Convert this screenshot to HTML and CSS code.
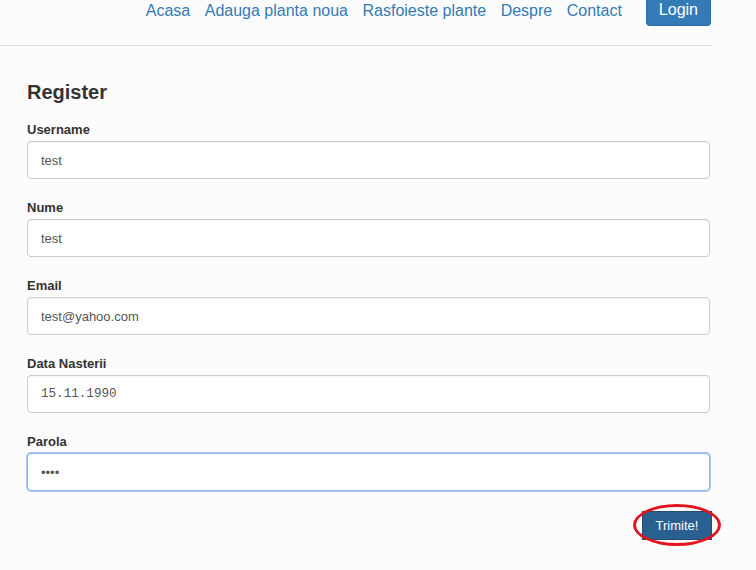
FILE: index.html
```html
<!DOCTYPE html>
<html lang="ro">
<head>
<meta charset="utf-8">
<title>Register</title>
<link rel="stylesheet" href="styles.css">
</head>
<body>
<header class="topbar">
  <nav class="nav">
    <a class="nav-link" href="#">Acasa</a>
    <a class="nav-link" href="#">Adauga planta noua</a>
    <a class="nav-link" href="#">Rasfoieste plante</a>
    <a class="nav-link" href="#">Despre</a>
    <a class="nav-link" href="#">Contact</a>
    <a class="btn-login" href="#">Login</a>
  </nav>
</header>
<main class="content">
  <h1 class="title">Register</h1>
  <form class="form">
    <div class="group">
      <label class="label">Username</label>
      <input class="control" type="text" value="test">
    </div>
    <div class="group">
      <label class="label">Nume</label>
      <input class="control" type="text" value="test">
    </div>
    <div class="group">
      <label class="label">Email</label>
      <input class="control" type="text" value="test@yahoo.com">
    </div>
    <div class="group">
      <label class="label">Data Nasterii</label>
      <input class="control mono" type="text" value="15.11.1990">
    </div>
    <div class="group">
      <label class="label">Parola</label>
      <input class="control focused" type="password" value="test">
    </div>
    <div class="actions">
      <span class="submit-wrap">
        <button class="btn-submit" type="button">Trimite!</button>
        <span class="ring"></span>
      </span>
    </div>
  </form>
</main>
</body>
</html>
```
FILE: styles.css
```css
html, body {
  margin: 0;
  padding: 0;
  background: #fcfcfc;
}
body {
  font-family: "Liberation Sans", Arial, sans-serif;
  color: #333;
}
.topbar {
  width: 712px;
  height: 45px;
  border-bottom: 1px solid #dedede;
}
.nav {
  display: flex;
  justify-content: flex-end;
  align-items: flex-start;
  gap: 14.5px;
  padding-right: 1px;
}
.nav-link {
  font-size: 16px;
  line-height: 20px;
  margin-top: 1px;
  color: #337ab7;
  text-decoration: none;
}
.btn-login {
  margin-left: 9.5px;
  margin-top: -6px;
  padding: 6px 12px 5px;
  font-size: 16px;
  line-height: 20px;
  color: #fff;
  background: #337ab7;
  border: 1px solid #2e6da4;
  border-top: 0;
  border-radius: 0 0 4px 4px;
  text-decoration: none;
}
.content {
  padding: 0 0 20px 27px;
  width: 683px;
}
.title {
  margin: 35px 0 19px;
  font-size: 20px;
  line-height: 22px;
  font-weight: bold;
  color: #333;
}
.form {
  margin: 0;
}
.group {
  display: flex;
  flex-direction: column;
  margin-bottom: 21px;
}
.label {
  font-size: 13px;
  line-height: 15px;
  font-weight: bold;
  color: #333;
  margin-bottom: 4px;
}
.control {
  box-sizing: border-box;
  width: 683px;
  height: 38px;
  margin: 0;
  padding: 0 13px;
  font-family: "Liberation Sans", Arial, sans-serif;
  font-size: 13px;
  color: #555;
  background: #fff;
  border: 1px solid #ccc;
  border-radius: 4px;
  box-shadow: inset 0 1px 1px rgba(0,0,0,.05);
  outline: none;
}
.mono {
  font-family: "Liberation Mono", "DejaVu Sans Mono", monospace;
  font-size: 12.6px;
}
.focused {
  border-color: #8ab4ef;
  box-shadow: 0 0 0 1px rgba(138,180,239,.7);
}
.actions {
  display: flex;
  justify-content: flex-end;
  margin-top: -1px;
  margin-right: -2px;
}
.submit-wrap {
  position: relative;
  display: inline-block;
}
.btn-submit {
  display: block;
  box-sizing: border-box;
  width: 70px;
  height: 29px;
  padding: 0;
  font-family: "Liberation Sans", Arial, sans-serif;
  font-size: 13px;
  color: #fff;
  background: #286090;
  border: 1px solid #204d74;
  border-radius: 0;
}
.ring {
  position: absolute;
  left: -9px;
  top: -7px;
  width: 88px;
  height: 42px;
  box-sizing: border-box;
  border: 3px solid #e3141e;
  border-radius: 50%;
}
```
